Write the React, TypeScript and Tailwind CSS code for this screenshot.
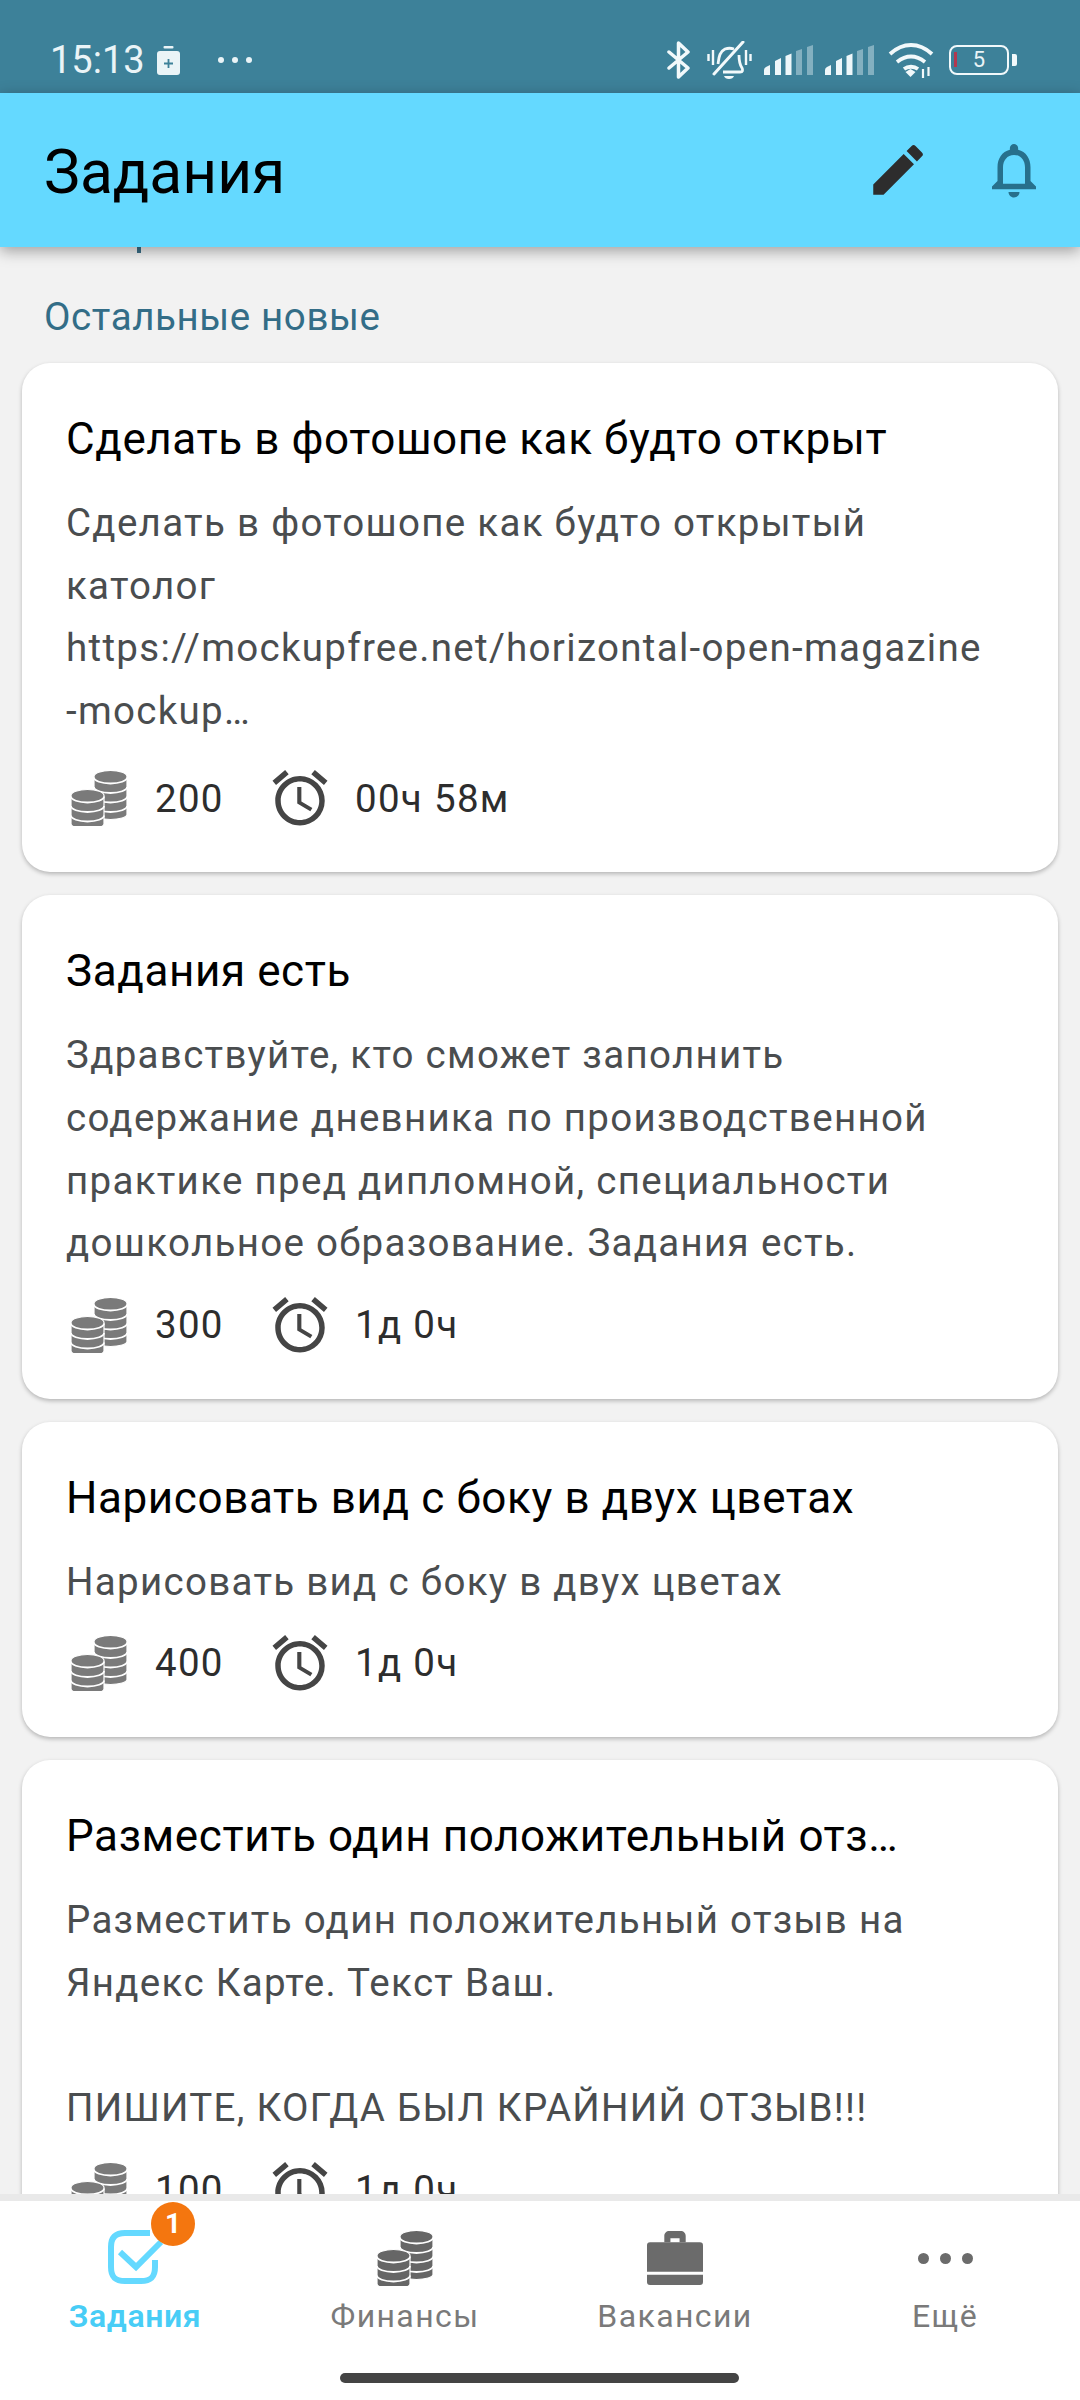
import { MdAccessAlarm, MdEdit, MdNotificationsNone } from "react-icons/md";

const font = "font-['Roboto','Noto_Sans',sans-serif]";

interface Task {
    title: string;
    body: string[];
    price: number;
    time: string;
    // first card sits a few px taller than the others
    tall?: boolean;
}

const tasks: Task[] = [
    {
        title: "Сделать в фотошопе как будто открыт",
        body: [
            "Сделать в фотошопе как будто открытый",
            "католог",
            "https://mockupfree.net/horizontal-open-magazine",
            "-mockup…",
        ],
        price: 200,
        time: "00ч 58м",
        tall: true,
    },
    {
        title: "Задания есть",
        body: [
            "Здравствуйте, кто сможет заполнить",
            "содержание дневника по производственной",
            "практике пред дипломной, специальности",
            "дошкольное образование. Задания есть.",
        ],
        price: 300,
        time: "1д 0ч",
    },
    {
        title: "Нарисовать вид с боку в двух цветах",
        body: ["Нарисовать вид с боку в двух цветах"],
        price: 400,
        time: "1д 0ч",
    },
    {
        title: "Разместить один положительный отз…",
        body: [
            "Разместить один положительный отзыв на",
            "Яндекс Карте. Текст Ваш.",
            "",
            "ПИШИТЕ, КОГДА БЫЛ КРАЙНИЙ ОТЗЫВ!!!",
        ],
        price: 100,
        time: "1д 0ч",
    },
];

function Stack({ cx, top, layers, fill }: { cx: number; top: number; layers: number; fill: string }) {
    const bottom = top + layers * 9.5;
    return (
        <g>
            <path
                d={`M${cx - 16.500} ${top}a16.500 6 0 0 1 33 0V${bottom}a16.500 5 0 0 1-33 0z`}
                fill={fill}
                stroke="#fff"
                strokeWidth={1.200}
            />
            {Array.from({ length: layers }, (_, i) => (
                <path
                    key={i}
                    d={`M${cx - 16.500} ${top + 1 + i * 9.5}a16.500 6 0 0 0 33 0`}
                    fill="none"
                    stroke="#fff"
                    strokeWidth={1.800}
                />
            ))}
        </g>
    );
}

function Coins({ fill }: { fill: string }) {
    return (
        <svg viewBox="0 0 56 56" className="h-[56px] w-[56px] shrink-0">
            <Stack cx={39.5} top={6.5} layers={4} fill={fill} />
            <Stack cx={16.5} top={25.5} layers={3} fill={fill} />
        </svg>
    );
}

function Signal() {
    return (
        <svg viewBox="0 0 49 30" className="h-[30px] w-[49px]" fill="#eef7fa">
            <path d="M0 30v-5q0-2 2-3l4-2v10z" />
            <path d="M11 30V16l6-3v17z" />
            <path d="M21.500 30V11l6-2.500V30z" />
            <path d="M32 30V6l6-2v26z" opacity="0.4" />
            <path d="M43 30V2l6-2v30z" opacity="0.4" />
        </svg>
    );
}

function StatusBar() {
    return (
        <div className="flex h-[93px] items-center bg-[#3d8199] pl-[50px] pr-[63px] pt-[27px] text-[#eaf4f7]">
            <span className="text-[38px] leading-none">15:13</span>
            <svg viewBox="0 0 23 29" className="ml-[12px] h-[29px] w-[23px]">
                <rect x="6.500" y="0" width="10" height="2.500" rx="1" fill="#eaf4f7" />
                <rect x="0" y="5" width="23" height="24" rx="3" fill="#eaf4f7" />
                <path d="M11.500 13v9M7 17.500h9" stroke="#3d8199" strokeWidth="1.800" />
            </svg>
            <div className="ml-[38px] flex gap-[8px]">
                <span className="h-[6px] w-[6px] rounded-full bg-[#eaf4f7]" />
                <span className="h-[6px] w-[6px] rounded-full bg-[#eaf4f7]" />
                <span className="h-[6px] w-[6px] rounded-full bg-[#eaf4f7]" />
            </div>
            <div className="ml-auto flex items-center">
                <svg viewBox="0 0 25 38" className="h-[38px] w-[25px]" fill="none" stroke="#f2f9fb" strokeWidth="3.500" strokeLinejoin="round" strokeLinecap="round">
                    <path d="M3 11l19 16-9.500 9V2L22 11 3 27" />
                </svg>
                <svg viewBox="0 0 45 38" className="ml-[16px] h-[38px] w-[45px]" fill="none" stroke="#f2f9fb" strokeWidth="2.800">
                    <path d="M7 33L36 1" strokeWidth="3" strokeLinecap="round" />
                    <path d="M32 14c0 6 1 10 3 13 1 2 1 4-2 4H16" />
                    <path d="M11 23c1-6 1-12 7-15 3-1 6-1 9 0" />
                    <path d="M17 35h10q-1 3-5 3t-5-3z" fill="#f2f9fb" stroke="none" />
                    <path d="M1.500 13v7M6 9v15M39 9v15M43.500 13v7" strokeWidth="2.400" />
                </svg>
                <div className="ml-[12px]">
                    <Signal />
                </div>
                <div className="ml-[12px]">
                    <Signal />
                </div>
                <svg viewBox="0 0 46 35" className="ml-[14px] h-[35px] w-[46px]" fill="none" stroke="#f2f9fb" strokeWidth="3.800">
                    <path d="M2 11c13-12 29-12 42 0" />
                    <path d="M9 19c9-7 19-7 28 0" />
                    <path d="M16 26c4-3 10-3 14 0" />
                    <path d="M17.500 29l5-3 5 3-5 5z" fill="#f2f9fb" stroke="none" />
                    <path d="M35 26v9M40.500 24v9" strokeWidth="2.200" />
                </svg>
                <div className="ml-[15px] flex items-center gap-[3px]">
                    <div className="relative flex h-[30px] w-[60px] items-center justify-center rounded-[8px] border-[2.500px] border-[#f2f9fb] text-[22px] leading-none">
                        <span className="absolute left-[3px] top-[5px] h-[15px] w-[3px] bg-[#b2384f]" />
                        5
                    </div>
                    <span className="h-[12px] w-[5px] rounded-r-[2px] bg-[#f2f9fb]" />
                </div>
            </div>
        </div>
    );
}

function AppBar() {
    return (
        <div className="relative z-10 flex h-[154px] items-center bg-[#64d9ff] pl-[44px] pr-[33px] shadow-[0_4px_14px_rgba(0,0,0,0.35)]">
            <h1 className="pt-[7px] text-[60.500px] leading-none text-black">Задания</h1>
            <div className="ml-auto flex items-center gap-[50px]">
                <MdEdit className="h-[66px] w-[66px]" color="#2d2d2d" />
                <MdNotificationsNone className="h-[66px] w-[66px]" color="#27708c" />
            </div>
        </div>
    );
}

function TaskCard({ task }: { task: Task }) {
    return (
        <div className="rounded-[28px] bg-white pb-[41px] pl-[44px] pr-[20px] pt-[46px] shadow-[0_2px_4px_rgba(0,0,0,0.25)]">
            <div className="whitespace-nowrap text-[44px] leading-[60px] tracking-[0.6px] text-black">{task.title}</div>
            <div className="mt-[23px] text-[38.500px] leading-[62.600px] tracking-[1.300px] text-[#4a4d4f]">
                {task.body.map((line, i) => (
                    <div key={i} className="h-[62.600px] whitespace-nowrap">
                        {line}
                    </div>
                ))}
            </div>
            <div
                className={`${task.tall ? "mt-[23px]" : "mt-[17px]"} flex h-[66px] items-center text-[38.500px] tracking-[1.300px] text-[#2d2d2d]`}
            >
                <div className="ml-[5px]">
                    <Coins fill="#7a7a7a" />
                </div>
                <span className="ml-[28px] w-[68px]">{task.price}</span>
                <MdAccessAlarm className="ml-[44px] h-[66px] w-[66px]" color="#454545" />
                <span className="ml-[22px]">{task.time}</span>
            </div>
        </div>
    );
}

function BottomNav() {
    return (
        <div className="relative z-10 h-[206px] border-t-[7px] border-[#e9e9e9] bg-white">
            <div className="grid grid-cols-4 pt-[27px] text-[32px] leading-none tracking-[1.400px] text-[#7a7a7a]">
                <div className="flex flex-col items-center">
                    <div className="relative h-[60px] w-[60px]">
                        <svg viewBox="0 0 60 60" className="h-[60px] w-[60px]" fill="none" stroke="#64d9ff" strokeWidth="6">
                            <path d="M45 5H20C10 5 6 10 6 19v20c0 10 4 14 14 14h16c10 0 14-4 14-14v-7" />
                            <path d="M15 24l16 15 25-25" />
                        </svg>
                        <span className="absolute -top-[26px] left-[46px] flex h-[44px] w-[44px] items-center justify-center rounded-full bg-[#f4760f] text-[28px] font-bold tracking-normal text-white">
                            1
                        </span>
                    </div>
                    <span className="mt-[12px] font-semibold tracking-[0.6px] text-[#48cdf6]">Задания</span>
                </div>
                <div className="flex flex-col items-center">
                    <div className="flex h-[60px] items-center">
                        <Coins fill="#666" />
                    </div>
                    <span className="mt-[12px]">Финансы</span>
                </div>
                <div className="flex flex-col items-center">
                    <svg viewBox="0 0 55 55" className="h-[60px] w-[60px] p-[2px]" fill="#6b6b6b">
                        <path d="M17 12V6c0-3 2-5 5-5h11c3 0 5 2 5 5v6h-6V8H23v4z" />
                        <path d="M3 12h49c2 0 3 1 3 3v26H0V15c0-2 1-3 3-3z" />
                        <path d="M0 44h55v7c0 2-1 3-3 3H3c-2 0-3-1-3-3z" />
                    </svg>
                    <span className="mt-[12px]">Вакансии</span>
                </div>
                <div className="flex flex-col items-center">
                    <div className="flex h-[60px] items-center gap-[11px]">
                        <span className="h-[11px] w-[11px] rounded-full bg-[#6b6b6b]" />
                        <span className="h-[11px] w-[11px] rounded-full bg-[#6b6b6b]" />
                        <span className="h-[11px] w-[11px] rounded-full bg-[#6b6b6b]" />
                    </div>
                    <span className="mt-[12px]">Ещё</span>
                </div>
            </div>
            <div className="absolute bottom-[17px] left-[340px] h-[10px] w-[399px] rounded-full bg-[#444]" />
        </div>
    );
}

export default function App() {
    return (
        <div className={`${font} flex h-[2400px] w-[1080px] flex-col overflow-hidden bg-[#f2f2f2]`}>
            <StatusBar />
            <AppBar />
            <div className="h-0 flex-1 overflow-hidden px-[22px]">
                <div className="ml-[115px] h-[6px] w-[4px] bg-[#3a6f88]" />
                <div className="-mx-[22px] mt-[42px] px-[44px] text-[38.500px] leading-[44px] tracking-[0.6px] text-[#336d87]">
                    Остальные новые
                </div>
                <div className="mt-[24px] flex flex-col gap-[23px]">
                    {tasks.map((task) => (
                        <TaskCard key={task.title} task={task} />
                    ))}
                </div>
            </div>
            <BottomNav />
        </div>
    );
}
